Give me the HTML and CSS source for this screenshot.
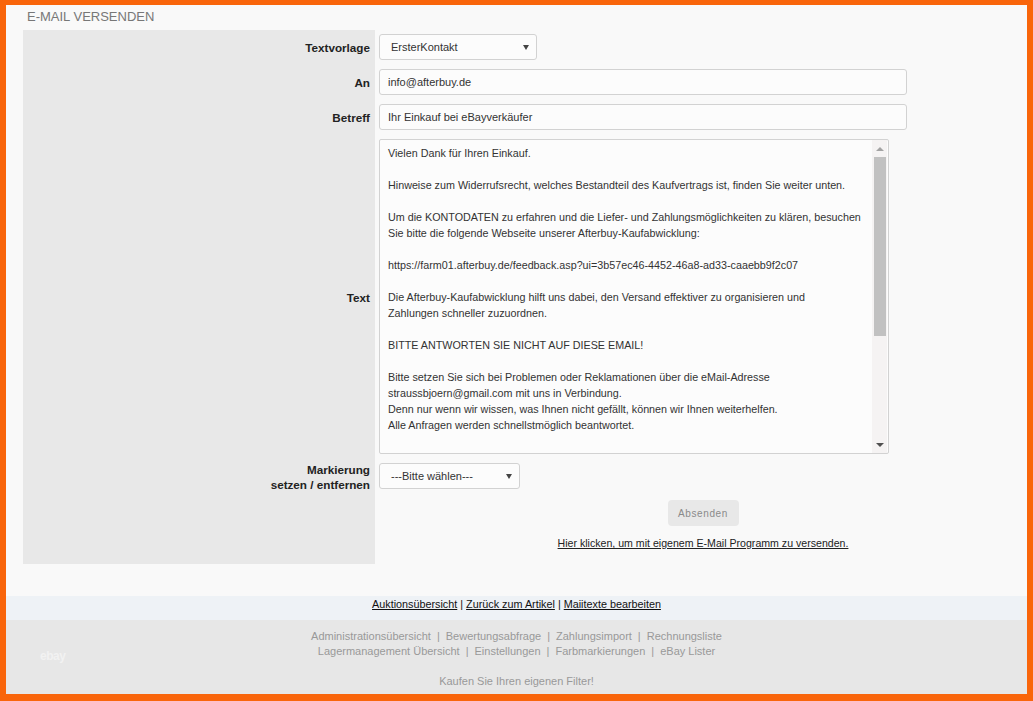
FILE: index.html
```html
<!DOCTYPE html>
<html lang="de">
<head>
<meta charset="utf-8">
<title>E-Mail versenden</title>
<link rel="stylesheet" href="styles.css">
</head>
<body>
<div class="frame">
  <main class="main">
    <h1 class="title">E-MAIL VERSENDEN</h1>
    <form class="form">
      <div class="label">Textvorlage</div>
      <div class="field">
        <div class="select select-wide"><span>ErsterKontakt</span><span class="caret"></span></div>
      </div>

      <div class="label">An</div>
      <div class="field"><input class="input" type="text" value="info@afterbuy.de"></div>

      <div class="label">Betreff</div>
      <div class="field"><input class="input" type="text" value="Ihr Einkauf bei eBayverkäufer"></div>

      <div class="label">Text</div>
      <div class="field">
        <div class="textarea">
          <div class="textarea-text">Vielen Dank für Ihren Einkauf.

Hinweise zum Widerrufsrecht, welches Bestandteil des Kaufvertrags ist, finden Sie weiter unten.

Um die KONTODATEN zu erfahren und die Liefer- und Zahlungsmöglichkeiten zu klären, besuchen
Sie bitte die folgende Webseite unserer Afterbuy-Kaufabwicklung:

https://farm01.afterbuy.de/feedback.asp?ui=3b57ec46-4452-46a8-ad33-caaebb9f2c07

Die Afterbuy-Kaufabwicklung hilft uns dabei, den Versand effektiver zu organisieren und
Zahlungen schneller zuzuordnen.

BITTE ANTWORTEN SIE NICHT AUF DIESE EMAIL!

Bitte setzen Sie sich bei Problemen oder Reklamationen über die eMail-Adresse
straussbjoern@gmail.com mit uns in Verbindung.
Denn nur wenn wir wissen, was Ihnen nicht gefällt, können wir Ihnen weiterhelfen.
Alle Anfragen werden schnellstmöglich beantwortet.</div>
          <div class="scrollbar">
            <div class="sb-btn"><span class="tri-up"></span></div>
            <div class="sb-thumb"></div>
            <div class="sb-track"></div>
            <div class="sb-btn"><span class="tri-down"></span></div>
          </div>
        </div>
      </div>

      <div class="label">Markierung<br>setzen / entfernen</div>
      <div class="field">
        <div class="select select-narrow"><span>---Bitte wählen---</span><span class="caret"></span></div>
      </div>

      <div class="label"></div>
      <div class="field actions">
        <button class="btn" type="button">Absenden</button>
        <a class="mail-link" href="#">Hier klicken, um mit eigenem E-Mail Programm zu versenden.</a>
      </div>
    </form>
  </main>

  <nav class="navband">
    <a href="#">Auktionsübersicht</a> | <a href="#">Zurück zum Artikel</a> | <a href="#">Maiitexte bearbeiten</a>
  </nav>

  <footer class="footer">
    <div class="logo">ebay</div>
    <div class="footer-links">
      <div class="fline">Administrationsübersicht<span class="sep">|</span>Bewertungsabfrage<span class="sep">|</span>Zahlungsimport<span class="sep">|</span>Rechnungsliste</div>
      <div class="fline">Lagermanagement Übersicht<span class="sep">|</span>Einstellungen<span class="sep">|</span>Farbmarkierungen<span class="sep">|</span>eBay Lister</div>
      <div class="fline fbuy">Kaufen Sie Ihren eigenen Filter!</div>
    </div>
    <div></div>
  </footer>
</div>
</body>
</html>
```

FILE: styles.css
```css
* { box-sizing: border-box; }

html, body {
  margin: 0;
  padding: 0;
}

body {
  background: #f9650b;
  font-family: "Liberation Sans", Arial, sans-serif;
  height: 701px;
  overflow: hidden;
}

.frame {
  margin: 5px 6px 7px 6px;
  height: 689px;
  display: flex;
  flex-direction: column;
  background: #f9f9f9;
}

.main {
  height: 591px;
  padding: 0 0 0 17px;
  background: #f9f9f9;
}

.title {
  margin: 0;
  padding: 4px 0 0 4px;
  height: 25px;
  font-size: 13px;
  line-height: 15px;
  font-weight: normal;
  color: #777;
}

.form {
  display: grid;
  grid-template-columns: 352px 1fr;
  margin: 0;
}

.label {
  background: #e8e8e8;
  text-align: right;
  padding-right: 5px;
  font-size: 11.7px;
  line-height: 15px;
  font-weight: bold;
  color: #222;
  display: flex;
  align-items: center;
  justify-content: flex-end;
}

.field {
  padding: 4px 0 5px 4px;
  display: flex;
  align-items: center;
}

.select {
  height: 26px;
  border: 1px solid #d2d2d2;
  border-radius: 3px;
  background: #fcfcfc;
  display: flex;
  align-items: center;
  justify-content: space-between;
  padding: 0 7px 0 11px;
  font-size: 11px;
  color: #333;
}

.select-wide { width: 158px; }
.select-narrow { width: 141px; }

.caret {
  width: 0;
  height: 0;
  border-left: 3px solid transparent;
  border-right: 3px solid transparent;
  border-top: 5px solid #444;
}

.input {
  width: 528px;
  height: 26px;
  border: 1px solid #d2d2d2;
  border-radius: 3px;
  background: #fcfcfc;
  padding: 0 8px;
  font-family: "Liberation Sans", Arial, sans-serif;
  font-size: 11px;
  color: #333;
  margin: 0;
  outline: none;
}

.textarea {
  width: 510px;
  height: 315px;
  border: 1px solid #d2d2d2;
  border-radius: 2px;
  background: #fcfcfc;
  display: flex;
}

.textarea-text {
  flex: 1;
  overflow: hidden;
  white-space: pre-line;
  padding: 5px 0 0 8px;
  font-size: 10.75px;
  line-height: 16px;
  color: #333;
}

.scrollbar {
  width: 15px;
  margin-right: 1px;
  background: #f5f3f3;
  display: flex;
  flex-direction: column;
}

.sb-btn {
  height: 17px;
  display: flex;
  align-items: center;
  justify-content: center;
}

.tri-up {
  width: 0;
  height: 0;
  border-left: 4px solid transparent;
  border-right: 4px solid transparent;
  border-bottom: 4px solid #a3a3a3;
}

.tri-down {
  width: 0;
  height: 0;
  border-left: 4px solid transparent;
  border-right: 4px solid transparent;
  border-top: 4px solid #505050;
}

.sb-thumb {
  height: 179px;
  margin: 0 1px 0 2px;
  background: #c1c1c1;
}

.sb-track { flex: 1; }

.actions {
  flex-direction: column;
  padding: 6px 0 14px 4px;
}

.btn {
  width: 71px;
  height: 26px;
  border: none;
  border-radius: 4px;
  background: #e8e8e8;
  color: #8a8a8a;
  font-family: "Liberation Sans", Arial, sans-serif;
  font-size: 10px;
  letter-spacing: 0.6px;
  padding: 0;
}

.mail-link {
  margin-top: 10px;
  font-size: 10.6px;
  line-height: 14px;
  color: #222;
  text-decoration: underline;
}

.navband {
  height: 24px;
  background: #eef2f6;
  text-align: center;
  font-size: 10.8px;
  line-height: 14px;
  padding-top: 1px;
  color: #111;
}

.navband a {
  color: #111;
  text-decoration: underline;
}

.footer {
  flex: 1;
  background: #e7e7e7;
  display: grid;
  grid-template-columns: 1fr auto 1fr;
  color: #999;
  font-size: 11px;
}

.logo {
  align-self: start;
  padding: 29px 0 0 34px;
  font-size: 12px;
  font-weight: bold;
  color: #f2f2f2;
  letter-spacing: -0.5px;
}

.footer-links {
  padding-top: 9px;
  text-align: center;
}

.fline {
  line-height: 15px;
}

.fbuy {
  margin-top: 15px;
}

.sep {
  margin: 0 6px;
}
```
